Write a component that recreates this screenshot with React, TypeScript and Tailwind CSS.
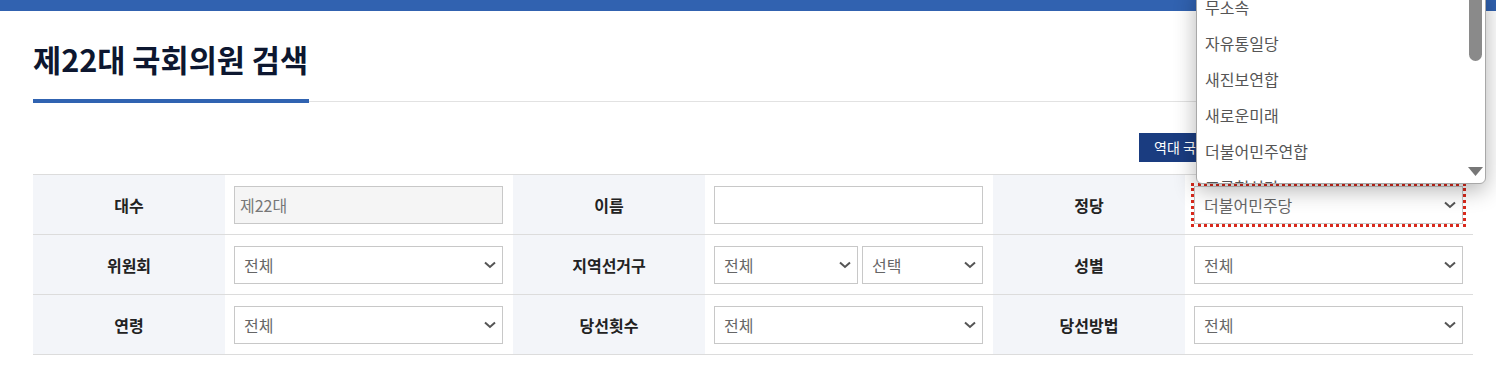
import { ReactNode } from "react";

const font = { fontFamily: '"Noto Sans CJK KR", "Noto Sans", sans-serif' };

const Chevron = () => (
  <svg width="12" height="8" viewBox="0 0 12 8" className="shrink-0">
    <path d="M1 1.5 L6 6 L11 1.5" fill="none" stroke="#555" strokeWidth="2" />
  </svg>
);

const Select = ({ value, className = "" }: { value: string; className?: string }) => (
  <div
    className={`flex h-[38px] items-center justify-between border border-[#c8c8c8] bg-white pl-[9px] pr-[6px] text-[16px] text-[#666] ${className}`}
  >
    <span>{value}</span>
    <Chevron />
  </div>
);

const Label = ({ children }: { children: ReactNode }) => (
  <div className="flex w-[192px] items-center justify-center bg-[#f3f5f9] text-[16px] font-bold text-[#222]">
    {children}
  </div>
);

const Field = ({ children }: { children: ReactNode }) => (
  <div className="flex w-[288px] items-center gap-[4px] pl-[9px] pr-[10px]">{children}</div>
);

const parties = ["무소속", "자유통일당", "새진보연합", "새로운미래", "더불어민주연합", "조국혁신당"];

const App = () => {
  return (
    <div className="relative h-[366px] w-[1496px] overflow-hidden bg-white" style={font}>
      <div className="h-[11px] bg-[#3162b0]" />

      <div className="ml-[33px] w-[1440px]">
        <div className="mt-[27px] border-b border-[#e2e2e2]">
          <h2 className="mb-[-2px] inline-block border-b-4 border-[#3063b1] pb-[19px] pr-[1px] text-[30.6px] font-bold leading-[42px] text-[#0d1730]">
            제22대 국회의원 검색
          </h2>
        </div>

        <div className="mt-[31px] flex justify-end gap-[4px]">
          <button className="h-[29px] w-[160px] bg-[#1a3c80] pl-[15px] text-left text-[14px] text-white">
            역대 국회의원 검색
          </button>
          <button className="h-[29px] w-[170px] bg-[#1a3c80] text-[14px] text-white">국회의원 현황</button>
        </div>

        <div className="mt-[12px] border-t border-[#dcdcdc]">
          <div className="flex h-[60px] border-b border-[#dcdcdc]">
            <Label>대수</Label>
            <Field>
              <div className="flex h-[38px] w-full items-center border border-[#c8c8c8] bg-[#f5f5f5] pl-[5px] text-[16px] text-[#777]">
                제22대
              </div>
            </Field>
            <Label>이름</Label>
            <Field>
              <div className="h-[38px] w-full border border-[#c8c8c8] bg-white" />
            </Field>
            <Label>정당</Label>
            <Field>
              <Select
                value="더불어민주당"
                className="w-full bg-[#ececec] outline-3 outline-dotted outline-[#d8291c]"
              />
            </Field>
          </div>
          <div className="flex h-[60px] border-b border-[#dcdcdc]">
            <Label>위원회</Label>
            <Field>
              <Select value="전체" className="w-full" />
            </Field>
            <Label>지역선거구</Label>
            <Field>
              <Select value="전체" className="w-[144px]" />
              <Select value="선택" className="flex-1" />
            </Field>
            <Label>성별</Label>
            <Field>
              <Select value="전체" className="w-full" />
            </Field>
          </div>
          <div className="flex h-[60px] border-b border-[#dcdcdc]">
            <Label>연령</Label>
            <Field>
              <Select value="전체" className="w-full" />
            </Field>
            <Label>당선횟수</Label>
            <Field>
              <Select value="전체" className="w-full" />
            </Field>
            <Label>당선방법</Label>
            <Field>
              <Select value="전체" className="w-full" />
            </Field>
          </div>
        </div>
      </div>

      {/* open select list */}
      <div className="absolute left-[1196px] top-[-12px] flex h-[196px] w-[290px] overflow-hidden rounded-b-[6px] border border-[#a8a8a8] bg-white shadow-[0_6px_22px_rgba(0,0,0,0.3)]">
        <ul className="flex-1 text-[16px] text-[#555]">
          {parties.map((p) => (
            <li key={p} className="flex h-[36px] items-center pl-[8px]">
              {p}
            </li>
          ))}
        </ul>
        <div className="relative w-[17px]">
          <div className="absolute left-[1px] top-0 h-[72px] w-[13px] rounded-b-[7px] bg-[#8a8a8a]" />
          <svg className="absolute bottom-[7px] left-0" width="15" height="9" viewBox="0 0 15 9">
            <path d="M0 0 H15 L7.5 9 Z" fill="#777" />
          </svg>
        </div>
      </div>
    </div>
  );
};

export default App;
